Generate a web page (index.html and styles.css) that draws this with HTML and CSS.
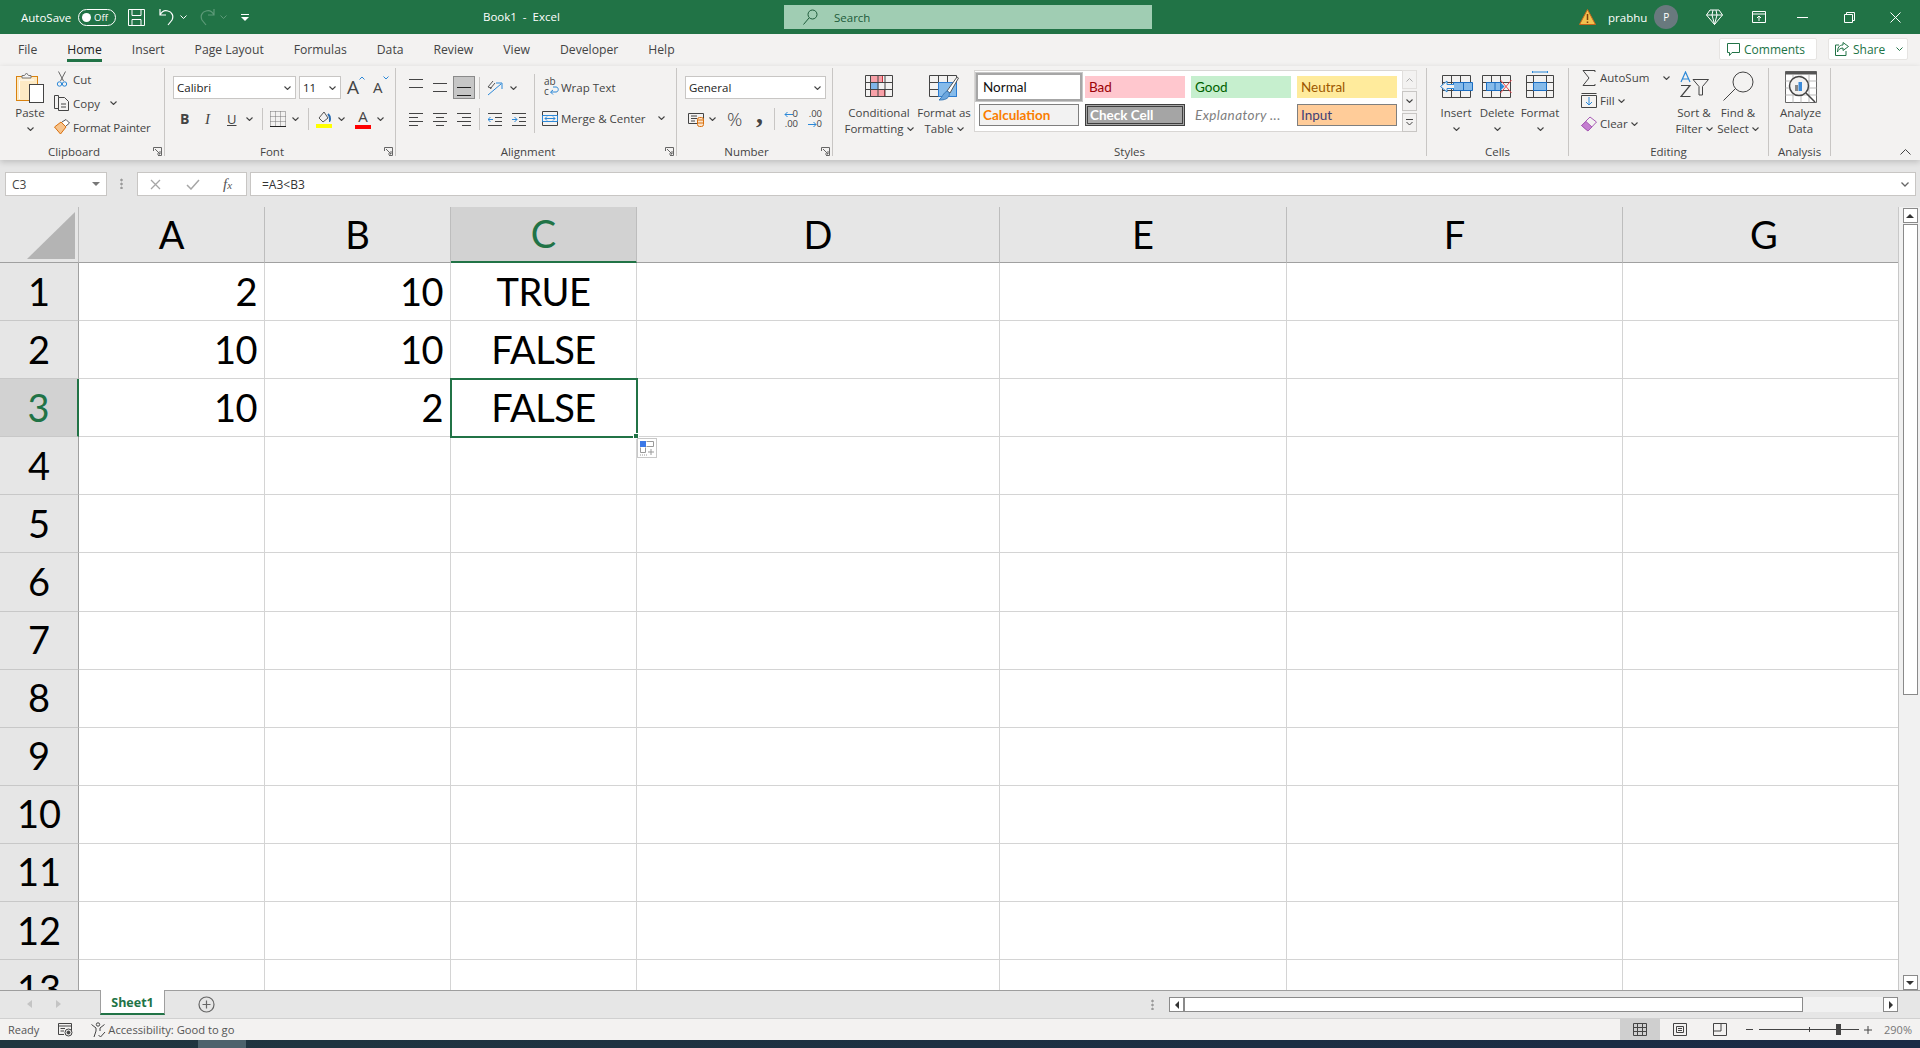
FILE: index.html
```html
<!DOCTYPE html>
<html lang="en">
<head>
    <meta charset="UTF-8">
    <title>Book1 - Excel</title>
    <link rel="stylesheet" href="styles.css">
</head>
<body>
    <svg class="sprite" aria-hidden="true">
        <symbol id="chev" viewBox="0 0 7 4"><path d="M.5.5 3.5 3.5 6.5.5" fill="none" stroke="#444" stroke-width="1.1"/></symbol>
        <symbol id="launcher" viewBox="0 0 9 9"><path d="M.5 4V.5H8.5V8.5H5M2 2 7 7M7 4V7H4" fill="none" stroke="#666"/></symbol>
    </svg>

    <!-- Title bar -->
    <div class="titlebar">
        <div class="qat">
            <span class="autosave">AutoSave</span>
            <span class="toggle"><i></i>Off</span>
            <svg class="qat-save" width="17" height="17" viewBox="0 0 17 17" fill="none" stroke="#fff"><path d="M.5.5H16.5V16.5H.5ZM4 .5V6.5H13V.5M4 16.5V10.5H13V16.5"/></svg>
            <svg class="qat-undo" width="15" height="18" viewBox="0 0 15 18" fill="none" stroke="#fff" stroke-width="1.2"><path d="M1 1V7H7M1 7C3 3 6 2 9 3 13 4 15 8 13 12L9 17"/></svg>
            <svg class="qat-c1" width="7" height="4" viewBox="0 0 7 4"><path d="M.5.5 3.5 3.5 6.5.5" fill="none" stroke="#fff"/></svg>
            <svg class="qat-redo" width="15" height="18" viewBox="0 0 15 18" fill="none" stroke="#5d9a78" stroke-width="1.2"><path d="M14 1V7H8M14 7C12 3 9 2 6 3 2 4 0 8 2 12L6 17"/></svg>
            <svg class="qat-c2" width="7" height="4" viewBox="0 0 7 4"><path d="M.5.5 3.5 3.5 6.5.5" fill="none" stroke="#5d9a78"/></svg>
            <svg class="qat-more" width="8" height="7" viewBox="0 0 8 7"><path d="M0 .5H8" stroke="#fff"/><path d="M0 3H8L4 7Z" fill="#fff"/></svg>
        </div>
        <div class="doc-title">Book1 &nbsp;-&nbsp; Excel</div>
        <div class="search">
            <svg width="15" height="16" viewBox="0 0 15 16" fill="none" stroke="#1d5b3a"><circle cx="9.5" cy="5.5" r="4.5"/><path d="M6 9 .5 15.5"/></svg>
            <span>Search</span>
        </div>
        <div class="account">
            <svg class="warn" width="17" height="16" viewBox="0 0 17 16"><path d="M8.5 .5 16.5 15.5H.5Z" fill="#f2c14e" stroke="#c9651b"/><path d="M8.5 5V11M8.5 12.5V14" stroke="#7a3d0c" stroke-width="1.5"/></svg>
            <span class="user">prabhu</span>
            <span class="avatar">P</span>
            <svg class="diamond" width="17" height="16" viewBox="0 0 17 16" fill="none" stroke="#fff"><path d="M4 1H13L16.5 6 8.5 15.5.5 6ZM.5 6H16.5M6 6 8.5 15.5 11 6M6 6 7 1M11 6 10 1"/></svg>
            <svg class="display" width="14" height="12" viewBox="0 0 14 12" fill="none" stroke="#fff"><path d="M.5.5H13.5V11.5H.5ZM.5 3H13.5M7 10V5M5 7 7 5 9 7"/></svg>
            <svg class="win-min" width="11" height="1"><path d="M0 .5H11" stroke="#fff"/></svg>
            <svg class="win-max" width="11" height="11" viewBox="0 0 11 11" fill="none" stroke="#fff"><path d="M.5 2.5H8.5V10.5H.5ZM2.5 2.5V.5H10.5V8.5H8.5"/></svg>
            <svg class="win-close" width="11" height="11" viewBox="0 0 11 11" stroke="#fff"><path d="M.5.5 10.5 10.5M10.5.5 .5 10.5"/></svg>
        </div>
    </div>

    <!-- Ribbon tabs -->
    <div class="tabs">
        <span class="tab">File</span>
        <span class="tab active">Home</span>
        <span class="tab">Insert</span>
        <span class="tab">Page Layout</span>
        <span class="tab">Formulas</span>
        <span class="tab">Data</span>
        <span class="tab">Review</span>
        <span class="tab">View</span>
        <span class="tab">Developer</span>
        <span class="tab">Help</span>
        <div class="tab-actions">
            <span class="action comments">
                <svg width="13" height="13" viewBox="0 0 13 13" fill="none" stroke="#217346"><path d="M.5.5H12.5V9.5H5L2.5 12.5V9.5H.5Z"/></svg>
                Comments
            </span>
            <span class="action share">
                <svg width="14" height="14" viewBox="0 0 14 14" fill="none" stroke="#217346"><path d="M8 .5 13.5 4.5 8 8.5V6C5 6 3 8 2.5 10 2.5 6 4 3 8 3ZM4 3H.5V13.5H11V9"/></svg>
                Share
                <svg class="share-chev" width="7" height="4" viewBox="0 0 7 4"><path d="M.5.5 3.5 3.5 6.5.5" fill="none" stroke="#217346"/></svg>
            </span>
        </div>
    </div>

    <!-- Ribbon -->
    <div class="ribbon">
        <div class="group g-clipboard launcher-group">
            <div class="group-body">
                <div class="big-btn paste">
                    <div class="big-icon">
                        <svg width="28" height="31" viewBox="0 0 28 31" fill="none"><rect x=".5" y="4.5" width="21" height="24" fill="#fdeac4" stroke="#d9820f"/><path d="M3.5 27V8H18" stroke="#fff"/><path d="M6 6V3.5H8.5L10.5 1 12.5 3.5H15V6Z" fill="#f3f2f1" stroke="#777"/><rect x="13.5" y="12.5" width="14" height="18" fill="#fff" stroke="#444"/></svg>
                    </div>
                    <span>Paste</span>
                    <svg class="chev" width="7" height="4"><use href="#chev"/></svg>
                </div>
                <div class="clip-stack">
                    <div class="small-btn">
                        <svg width="11" height="17" viewBox="0 0 11 17" fill="none"><path d="M2 .5 7 10M9 .5 4 10" stroke="#666"/><circle cx="3" cy="13" r="2.2" stroke="#2b88d8"/><circle cx="8" cy="13" r="2.2" stroke="#2b88d8"/></svg>
                        <span>Cut</span>
                    </div>
                    <div class="small-btn">
                        <svg width="16" height="16" viewBox="0 0 16 16" fill="none" stroke="#444"><path d="M4.5 2.5V.5H.5V13.5H4.5"/><path d="M4.5 2.5H10.5L14.5 6.5V15.5H4.5ZM7 9H12M7 12H12"/></svg>
                        <span>Copy</span>
                        <svg class="copy-chev" width="7" height="4"><use href="#chev"/></svg>
                    </div>
                    <div class="small-btn">
                        <svg width="16" height="16" viewBox="0 0 16 16" fill="none"><path d="M.5 8 7 3 12 8 6.5 15Z" fill="#f7c38b" stroke="#d9700f"/><path d="M8 3 12 .5 15.5 4 12 7" fill="#fff" stroke="#555"/></svg>
                        <span class="painter">Format Painter</span>
                    </div>
                </div>
            </div>
            <div class="group-label">Clipboard</div>
            <svg class="launcher" width="9" height="9"><use href="#launcher"/></svg>
        </div>

        <div class="group g-font launcher-group">
            <div class="group-body column">
                <div class="font-row1">
                    <span class="combo font-name">Calibri<svg width="7" height="4"><use href="#chev"/></svg></span>
                    <span class="combo font-size">11<svg width="7" height="4"><use href="#chev"/></svg></span>
                    <span class="grow">A<svg width="6" height="4" viewBox="0 0 6 4"><path d="M.5 3.5 3 1 5.5 3.5" fill="none" stroke="#2b88d8"/></svg></span>
                    <span class="shrink">A<svg width="6" height="4" viewBox="0 0 6 4"><path d="M.5.5 3 3 5.5.5" fill="none" stroke="#2b88d8"/></svg></span>
                </div>
                <div class="font-row2">
                    <b class="glyph">B</b>
                    <i class="glyph">I</i>
                    <u class="glyph">U</u>
                    <svg width="7" height="4"><use href="#chev"/></svg>
                    <span class="vsep"></span>
                    <svg width="16" height="16" viewBox="0 0 16 16" fill="none"><path d="M.5.5H15.5V15.5M.5.5V15.5M5.5.5V15.5M10.5.5V15.5M.5 5.5H15.5M.5 10.5H15.5" stroke="#777" stroke-dasharray="1 1"/><path d="M0 15.5H16" stroke="#222"/></svg>
                    <svg width="7" height="4"><use href="#chev"/></svg>
                    <span class="vsep"></span>
                    <svg width="16" height="18" viewBox="0 0 16 18" fill="none"><path d="M3 8 8 2 12 8 7 12Z" stroke="#555"/><path d="M12 4C15 7 14 11 13 11" stroke="#2b6cb0" stroke-width="2"/><path d="M0 16H16" stroke="#ffff00" stroke-width="4"/></svg>
                    <svg width="7" height="4"><use href="#chev"/></svg>
                    <span class="color-a">A</span>
                    <svg width="7" height="4"><use href="#chev"/></svg>
                </div>
            </div>
            <div class="group-label">Font</div>
            <svg class="launcher" width="9" height="9"><use href="#launcher"/></svg>
        </div>

        <div class="group g-align launcher-group">
            <div class="group-body">
                <div class="align-left">
                    <div class="align-row">
                        <svg width="14" height="17" viewBox="0 0 14 17" stroke="#444"><path d="M0 .5H14M0 8.5H14"/></svg>
                        <svg width="14" height="17" viewBox="0 0 14 17" stroke="#444"><path d="M0 4.5H14M0 12.5H14"/></svg>
                        <span class="pressed"><svg width="14" height="17" viewBox="0 0 14 17" stroke="#222"><path d="M0 8.5H14M0 16.5H14"/></svg></span>
                        <span class="vsep"></span>
                        <svg width="16" height="16" viewBox="0 0 16 16" fill="none"><path d="M1 7 6 1M3 9 8 3M1 7 5 8" stroke="#555"/><path d="M1 15 14 4M9 3H15V9" stroke="#2b88d8"/></svg>
                        <svg width="7" height="4"><use href="#chev"/></svg>
                    </div>
                    <div class="align-row second">
                        <svg width="14" height="13" viewBox="0 0 14 13" stroke="#444"><path d="M0 .5H14M0 4.5H9M0 8.5H14M0 12.5H9"/></svg>
                        <svg width="14" height="13" viewBox="0 0 14 13" stroke="#444"><path d="M0 .5H14M3 4.5H11M0 8.5H14M3 12.5H11"/></svg>
                        <svg width="14" height="13" viewBox="0 0 14 13" stroke="#444"><path d="M0 .5H14M5 4.5H14M0 8.5H14M5 12.5H14"/></svg>
                        <span class="vsep"></span>
                        <svg width="14" height="13" viewBox="0 0 14 13" fill="none"><path d="M0 .5H14M7 4.5H14M7 8.5H14M0 12.5H14" stroke="#444"/><path d="M5 6.5H0M2.5 4 0 6.5 2.5 9" stroke="#2b88d8"/></svg>
                        <svg width="14" height="13" viewBox="0 0 14 13" fill="none"><path d="M0 .5H14M7 4.5H14M7 8.5H14M0 12.5H14" stroke="#444"/><path d="M0 6.5H5M2.5 4 5 6.5 2.5 9" stroke="#2b88d8"/></svg>
                    </div>
                </div>
                <span class="tall-sep"></span>
                <div class="align-right">
                    <div class="wrap-row">
                        <svg width="16" height="16" viewBox="0 0 16 16" fill="none"><path d="M7 12H12C15 12 15 7 12 7H9M9 10 6.5 12 9 14.5" stroke="#2b88d8"/></svg>
                        <span class="ab">ab<br>c</span>
                        <span>Wrap Text</span>
                    </div>
                    <div class="merge-row">
                        <svg width="16" height="15" viewBox="0 0 16 15" fill="none"><path d="M.5.5H15.5V14.5H.5Z" stroke="#444"/><path d="M.5 4.5H15.5V10.5H.5Z" stroke="#2b88d8"/><path d="M3 7.5H13M5 5.5 3 7.5 5 9.5M11 5.5 13 7.5 11 9.5" stroke="#2b88d8"/></svg>
                        <span>Merge &amp; Center</span>
                        <svg class="merge-chev" width="7" height="4"><use href="#chev"/></svg>
                    </div>
                </div>
            </div>
            <div class="group-label">Alignment</div>
            <svg class="launcher" width="9" height="9"><use href="#launcher"/></svg>
        </div>

        <div class="group g-number launcher-group">
            <div class="group-body column">
                <span class="combo number-format">General<svg width="7" height="4"><use href="#chev"/></svg></span>
                <div class="number-row">
                    <svg width="17" height="15" viewBox="0 0 17 15" fill="none"><path d="M.5 1.5H15.5V11.5H.5Z" stroke="#444"/><path d="M3 4H9M3 6.5H9M3 9H7" stroke="#444"/><rect x="9.5" y="5.5" width="6" height="9" rx="2" fill="#fbe3c8" stroke="#d9700f"/><path d="M9.5 8H15.5M9.5 11H15.5" stroke="#d9700f"/></svg>
                    <svg width="7" height="4"><use href="#chev"/></svg>
                    <span class="percent">%</span>
                    <span class="comma">,</span>
                    <span class="vsep"></span>
                    <span class="decimals">
                        <span><svg width="9" height="7" viewBox="0 0 9 7" fill="none" stroke="#2b88d8"><path d="M9 3.5H1M3.5 1 1 3.5 3.5 6"/></svg>0</span>
                        <span>.00</span>
                    </span>
                    <span class="decimals">
                        <span>.00</span>
                        <span><svg width="9" height="7" viewBox="0 0 9 7" fill="none" stroke="#2b88d8"><path d="M0 3.5H8M5.5 1 8 3.5 5.5 6"/></svg>0</span>
                    </span>
                </div>
            </div>
            <div class="group-label">Number</div>
            <svg class="launcher" width="9" height="9"><use href="#launcher"/></svg>
        </div>

        <div class="group g-styles">
            <div class="group-body">
                <div class="big-btn cf">
                    <div class="big-icon">
                        <svg width="28" height="22" viewBox="0 0 28 22" fill="none"><path d="M5.5.5H17.5V7.5H5.5ZM5.5 14.5H19.5V21.5H5.5Z" fill="#f8a1a8" stroke="#c8323c"/><path d="M5.5 7.5H13.5V14.5H5.5Z" fill="#7eb6e8"/><path d="M.5.5H27.5V21.5H.5ZM.5 7.5H27.5M.5 14.5H27.5M5.5.5V21.5M13 .5V21.5M20 .5V21.5" stroke="#444"/></svg>
                    </div>
                    <span>Conditional</span>
                    <span>Formatting <svg width="7" height="4"><use href="#chev"/></svg></span>
                </div>
                <div class="big-btn ft">
                    <div class="big-icon">
                        <svg width="30" height="26" viewBox="0 0 30 26" fill="none"><path d="M.5.5H27.5V21.5H.5ZM.5 7.5H27.5M.5 14.5H27.5M9.5.5V21.5M18.5.5V21.5" stroke="#444"/><path d="M9.5 7.5H27.5V21.5H9.5Z" fill="#86bbea" stroke="#2b7cd3"/><path d="M18 16 28 2 29.5 3 21 18Z" fill="#fff" stroke="#555"/><path d="M18 16C20 17 21 18 20 21 18 25 13 25 10 25 13 23 14 18 18 16Z" fill="#6ca6dd" stroke="#3b7cba"/></svg>
                    </div>
                    <span>Format as</span>
                    <span>Table <svg width="7" height="4"><use href="#chev"/></svg></span>
                </div>
                <div class="gallery">
                    <div class="style-grid">
                        <span class="style s-normal">Normal</span>
                        <span class="style s-bad">Bad</span>
                        <span class="style s-good">Good</span>
                        <span class="style s-neutral">Neutral</span>
                        <span class="style s-calc">Calculation</span>
                        <span class="style s-check">Check Cell</span>
                        <span class="style s-expl">Explanatory ...</span>
                        <span class="style s-input">Input</span>
                    </div>
                    <div class="gallery-scroll">
                        <span class="gbtn up"><svg width="7" height="4" viewBox="0 0 7 4"><path d="M.5 3.5 3.5.5 6.5 3.5" fill="none" stroke="#aaa"/></svg></span>
                        <span class="gbtn down"><svg width="7" height="4"><use href="#chev"/></svg></span>
                        <span class="gbtn more"><svg width="7" height="7" viewBox="0 0 7 7"><path d="M0 .5H7" stroke="#444"/><path d="M.5 3 3.5 6 6.5 3" fill="none" stroke="#444"/></svg></span>
                    </div>
                </div>
            </div>
            <div class="group-label">Styles</div>
        </div>

        <div class="group g-cells">
            <div class="group-body">
                <div class="big-btn insert">
                    <div class="big-icon">
                        <svg width="33" height="26" viewBox="0 0 33 26" fill="none"><path d="M2.5 3.5H30.5V25.5H2.5ZM2.5 10.5H30.5M2.5 18.5H30.5M11.5 3.5V25.5M20.5 3.5V25.5" stroke="#444"/><path d="M13.5 10.5H32.5V18.5H13.5Z" fill="#86bbea" stroke="#1b6ec2"/><path d="M23.5 10.5V18.5" stroke="#1b6ec2"/><path d="M14 12.5H7V9L.5 14.5 7 20V16.5H14" fill="#f3f2f1" stroke="#2b88d8"/></svg>
                    </div>
                    <span>Insert</span>
                    <svg class="chev" width="7" height="4"><use href="#chev"/></svg>
                </div>
                <div class="big-btn delete">
                    <div class="big-icon">
                        <svg width="30" height="26" viewBox="0 0 30 26" fill="none"><path d="M.5 3.5H28.5V25.5H.5ZM.5 10.5H28.5M.5 18.5H28.5M9.5 3.5V25.5M18.5 3.5V25.5" stroke="#444"/><path d="M4.5 10.5H18.5V18.5H4.5Z" fill="#86bbea" stroke="#1b6ec2"/><path d="M13 10.5V18.5" stroke="#1b6ec2"/><path d="M18.5 10.5 22.5 14.5 18.5 18.5Z" fill="#2b88d8"/><path d="M18.5 8 29.5 21M29.5 8 18.5 21" stroke="#e8474f"/></svg>
                    </div>
                    <span>Delete</span>
                    <svg class="chev" width="7" height="4"><use href="#chev"/></svg>
                </div>
                <div class="big-btn format">
                    <div class="big-icon top-bar">
                        <svg width="28" height="27" viewBox="0 0 28 27" fill="none"><path d="M6.5 1H21.5M6.5 0V2M21.5 0V2" stroke="#2b88d8"/><path d="M.5 4.5H27.5V26.5H.5ZM.5 11.5H27.5M.5 19.5H27.5M7.5 4.5V26.5M20.5 4.5V26.5" stroke="#444"/><path d="M7.5 11.5H20.5V19.5H7.5Z" fill="#86bbea" stroke="#1b6ec2"/></svg>
                    </div>
                    <span>Format</span>
                    <svg class="chev" width="7" height="4"><use href="#chev"/></svg>
                </div>
            </div>
            <div class="group-label">Cells</div>
        </div>

        <div class="group g-editing">
            <div class="group-body">
                <div class="edit-stack">
                    <div class="small-btn">
                        <svg width="14" height="16" viewBox="0 0 14 16" fill="none" stroke="#444"><path d="M13 2V.5H1L7 8 1 15.5H13V14"/></svg>
                        <span>AutoSum</span>
                        <svg class="sum-chev" width="7" height="4"><use href="#chev"/></svg>
                    </div>
                    <div class="small-btn">
                        <svg width="16" height="15" viewBox="0 0 16 15" fill="none"><path d="M.5 2.5H15.5V14.5H.5Z" stroke="#444"/><path d="M.5.5H15.5" stroke="#444"/><path d="M8 4V12M5 9 8 12 11 9" stroke="#2b88d8"/></svg>
                        <span>Fill</span>
                        <svg width="7" height="4"><use href="#chev"/></svg>
                    </div>
                    <div class="small-btn">
                        <svg width="16" height="16" viewBox="0 0 16 16"><path d="M.5 9.5 9 1 15.5 6 7 15Z" fill="#f3f2f1" stroke="#a75bb5"/><path d="M.5 9.5 5 5.5 11 11 7 15Z" fill="#c47fd0" stroke="#a75bb5"/></svg>
                        <span>Clear</span>
                        <svg width="7" height="4"><use href="#chev"/></svg>
                    </div>
                </div>
                <div class="big-btn sort">
                    <div class="big-icon tight">
                        <svg width="29" height="27" viewBox="0 0 29 27" fill="none"><path d="M1 11 5.5 1 10 11M2.5 8H8.5" stroke="#2b88d8" stroke-width="1.2"/><path d="M1 14.5H10L1 25.5H10.5" stroke="#444" stroke-width="1.2"/><path d="M13 8.5H28.5L22.5 15.5V24H19V15.5Z" stroke="#444"/></svg>
                    </div>
                    <span>Sort &amp;</span>
                    <span>Filter <svg width="7" height="4"><use href="#chev"/></svg></span>
                </div>
                <div class="big-btn find">
                    <div class="big-icon tight">
                        <svg width="31" height="30" viewBox="0 0 31 30" fill="none" stroke="#444"><circle cx="20" cy="11" r="10"/><path d="M12 18 .5 29.5"/></svg>
                    </div>
                    <span>Find &amp;</span>
                    <span>Select <svg width="7" height="4"><use href="#chev"/></svg></span>
                </div>
            </div>
            <div class="group-label">Editing</div>
        </div>

        <div class="group g-analysis">
            <div class="group-body">
                <div class="big-btn analyze">
                    <div class="big-icon tight">
                        <svg width="32" height="32" viewBox="0 0 32 32" fill="none"><path d="M.5.5H31.5V31.5H.5Z" stroke="#666" fill="#fff"/><path d="M.5 2H31.5" stroke="#555" stroke-width="3"/><path d="M.5 10H31.5M.5 17H31.5M.5 24H31.5M8 4V31.5M16 4V31.5M24 4V31.5" stroke="#bbb"/><circle cx="14" cy="15" r="9.5" fill="#f3f2f1" stroke="#444" stroke-width="1.5"/><path d="M10 14H13V20H10Z" fill="#888"/><path d="M13.5 11H17V20H13.5Z" fill="#3b8ad9"/><path d="M21 22 30 31" stroke="#444" stroke-width="1.5"/></svg>
                    </div>
                    <span>Analyze</span>
                    <span>Data</span>
                </div>
            </div>
            <div class="group-label">Analysis</div>
        </div>

        <svg class="collapse" width="11" height="6" viewBox="0 0 11 6"><path d="M.5 5.5 5.5.5 10.5 5.5" fill="none" stroke="#444"/></svg>
    </div>

    <!-- Formula bar -->
    <div class="formula-bar">
        <div class="name-box">C3<svg width="8" height="4" viewBox="0 0 8 4"><path d="M0 0H8L4 4Z" fill="#777"/></svg></div>
        <div class="dots"></div>
        <div class="fx-box">
            <svg width="11" height="11" viewBox="0 0 11 11" stroke="#a6a6a6" stroke-width="1.3"><path d="M1 1 10 10M10 1 1 10"/></svg>
            <svg width="14" height="11" viewBox="0 0 14 11" fill="none" stroke="#a6a6a6" stroke-width="1.5"><path d="M1 6 5 10 13 1"/></svg>
            <span class="fx">f<small>x</small></span>
        </div>
        <div class="formula-input">=A3&lt;B3<svg width="8" height="5" viewBox="0 0 8 5"><path d="M.5.5 4 4 7.5.5" fill="none" stroke="#666" stroke-width="1.3"/></svg></div>
    </div>

    <!-- Sheet -->
    <div class="sheet">
        <div class="grid">
            <div class="row head-row">
                <div class="corner"><span></span></div>
                <div class="col-head">A</div>
                <div class="col-head">B</div>
                <div class="col-head selected">C</div>
                <div class="col-head">D</div>
                <div class="col-head">E</div>
                <div class="col-head">F</div>
                <div class="col-head">G</div>
            </div>
            <div class="row"><div class="row-head">1</div><div class="cell num">2</div><div class="cell num">10</div><div class="cell bool">TRUE</div><div class="cell"></div><div class="cell"></div><div class="cell"></div><div class="cell"></div></div>
            <div class="row"><div class="row-head">2</div><div class="cell num">10</div><div class="cell num">10</div><div class="cell bool">FALSE</div><div class="cell"></div><div class="cell"></div><div class="cell"></div><div class="cell"></div></div>
            <div class="row"><div class="row-head selected">3</div><div class="cell num">10</div><div class="cell num">2</div><div class="cell bool active">FALSE
                <span class="handle"></span>
                <span class="quick-analysis"><svg width="16" height="16" viewBox="0 0 16 16" fill="none"><rect x="1" y="1" width="6" height="6" fill="#3b78e7"/><path d="M7.5 1.5H14.5V6.5H7.5M1.5 7.5V12.5H6.5V7.5" stroke="#999"/><path d="M1 15H8" stroke="#999" stroke-dasharray="1 1"/><path d="M12 9V15M9 12H15" stroke="#999"/></svg></span>
            </div><div class="cell"></div><div class="cell"></div><div class="cell"></div><div class="cell"></div></div>
            <div class="row"><div class="row-head">4</div><div class="cell"></div><div class="cell"></div><div class="cell"></div><div class="cell"></div><div class="cell"></div><div class="cell"></div><div class="cell"></div></div>
            <div class="row"><div class="row-head">5</div><div class="cell"></div><div class="cell"></div><div class="cell"></div><div class="cell"></div><div class="cell"></div><div class="cell"></div><div class="cell"></div></div>
            <div class="row"><div class="row-head">6</div><div class="cell"></div><div class="cell"></div><div class="cell"></div><div class="cell"></div><div class="cell"></div><div class="cell"></div><div class="cell"></div></div>
            <div class="row"><div class="row-head">7</div><div class="cell"></div><div class="cell"></div><div class="cell"></div><div class="cell"></div><div class="cell"></div><div class="cell"></div><div class="cell"></div></div>
            <div class="row"><div class="row-head">8</div><div class="cell"></div><div class="cell"></div><div class="cell"></div><div class="cell"></div><div class="cell"></div><div class="cell"></div><div class="cell"></div></div>
            <div class="row"><div class="row-head">9</div><div class="cell"></div><div class="cell"></div><div class="cell"></div><div class="cell"></div><div class="cell"></div><div class="cell"></div><div class="cell"></div></div>
            <div class="row"><div class="row-head">10</div><div class="cell"></div><div class="cell"></div><div class="cell"></div><div class="cell"></div><div class="cell"></div><div class="cell"></div><div class="cell"></div></div>
            <div class="row"><div class="row-head">11</div><div class="cell"></div><div class="cell"></div><div class="cell"></div><div class="cell"></div><div class="cell"></div><div class="cell"></div><div class="cell"></div></div>
            <div class="row"><div class="row-head">12</div><div class="cell"></div><div class="cell"></div><div class="cell"></div><div class="cell"></div><div class="cell"></div><div class="cell"></div><div class="cell"></div></div>
            <div class="row"><div class="row-head">13</div><div class="cell"></div><div class="cell"></div><div class="cell"></div><div class="cell"></div><div class="cell"></div><div class="cell"></div><div class="cell"></div></div>
        </div>
        <div class="vscroll">
            <span class="sbtn"><svg width="8" height="4" viewBox="0 0 8 4"><path d="M4 0 8 4H0Z" fill="#333"/></svg></span>
            <span class="vthumb"></span>
            <span class="sbtn end"><svg width="8" height="4" viewBox="0 0 8 4"><path d="M0 0H8L4 4Z" fill="#333"/></svg></span>
        </div>
    </div>

    <!-- Sheet tabs -->
    <div class="sheet-tabs">
        <svg class="nav-l" width="5" height="8" viewBox="0 0 5 8"><path d="M5 0V8L0 4Z" fill="#c4c4c4"/></svg>
        <svg class="nav-r" width="5" height="8" viewBox="0 0 5 8"><path d="M0 0V8L5 4Z" fill="#c4c4c4"/></svg>
        <div class="sheet-tab">Sheet1</div>
        <svg class="add-sheet" width="17" height="17" viewBox="0 0 17 17" fill="none" stroke="#666" stroke-width="1.2"><circle cx="8.5" cy="8.5" r="7.5"/><path d="M8.5 4.5V12.5M4.5 8.5H12.5"/></svg>
        <div class="split-dots"></div>
        <div class="hscroll">
            <span class="sbtn"><svg width="4" height="8" viewBox="0 0 4 8"><path d="M4 0V8L0 4Z" fill="#333"/></svg></span>
            <span class="hthumb"></span>
            <span class="sbtn end"><svg width="4" height="8" viewBox="0 0 4 8"><path d="M0 0V8L4 4Z" fill="#333"/></svg></span>
        </div>
    </div>

    <!-- Status bar -->
    <div class="statusbar">
        <span class="ready">Ready</span>
        <svg class="macro" width="15" height="14" viewBox="0 0 15 14" fill="none" stroke="#444"><path d="M.5.5H13.5V11.5H7M.5.5V11.5H6M.5 3H13.5M2.5 5.5H7M2.5 8H6"/><circle cx="10.5" cy="9.5" r="3.5" fill="#f3f2f1"/><circle cx="10.5" cy="9.5" r="1.5" fill="#444"/></svg>
        <svg class="a11y" width="15" height="16" viewBox="0 0 15 16" fill="none" stroke="#444"><circle cx="7" cy="2.5" r="1.7"/><path d="M.5 2.5 5 6V9L3 15M13.5 2.5 9 6V9M7.5 13 9.5 15 14 10"/></svg>
        <span class="a11y-text">Accessibility: Good to go</span>
        <div class="views">
            <span class="view on"><svg width="14" height="13" viewBox="0 0 14 13" fill="none" stroke="#444"><path d="M.5.5H13.5V12.5H.5ZM.5 4.5H13.5M.5 8.5H13.5M4.5.5V12.5M9.5.5V12.5"/></svg></span>
            <span class="view"><svg width="14" height="13" viewBox="0 0 14 13" fill="none" stroke="#444"><path d="M.5.5H13.5V12.5H.5ZM3.5 3.5H10.5V9.5H3.5ZM5 5.5H9M5 7.5H9"/></svg></span>
            <span class="view"><svg width="14" height="13" viewBox="0 0 14 13" fill="none" stroke="#444"><path d="M.5.5H13.5V12.5H.5ZM.5 8H8M8 .5V8"/></svg></span>
        </div>
        <div class="zoom">
            <svg width="7" height="1"><path d="M0 .5H7" stroke="#444"/></svg>
            <div class="slider"><span class="tick"></span><span class="thumb"></span></div>
            <svg width="8" height="8" viewBox="0 0 8 8" stroke="#444"><path d="M0 4H8M4 0V8"/></svg>
            <span class="zoom-pct">290%</span>
        </div>
    </div>

    <div class="taskbar">
        <span class="task-on"></span>
        <span class="clock">10:34 AM</span>
    </div>
</body>
</html>
```
FILE: styles.css
```css
* {
    box-sizing: border-box;
}

body {
    margin: 0;
    height: 1048px;
    overflow: hidden;
    display: flex;
    flex-direction: column;
    font-family: "Open Sans", "Noto Sans", sans-serif;
    font-size: 11.5px;
    color: #444;
    background-color: #f3f2f1;
}

svg {
    display: block;
    flex: none;
}

.sprite {
    width: 0;
    height: 0;
    position: absolute;
}

/* Title bar */
.titlebar {
    height: 34px;
    flex: none;
    background-color: #217346;
    color: #fff;
    display: flex;
    align-items: center;
}

.qat {
    width: 784px;
    display: flex;
    align-items: center;
    padding-left: 21px;
}

.autosave {
    width: 57px;
}

.toggle {
    width: 38px;
    height: 17px;
    border: 1px solid #fff;
    border-radius: 9px;
    font-size: 9.5px;
    display: flex;
    align-items: center;
    gap: 3px;
    padding-left: 3px;
}

.toggle i {
    width: 9px;
    height: 9px;
    background-color: #fff;
    border-radius: 50%;
}

.qat-save { margin-left: 12px; }
.qat-undo { margin-left: 14px; }
.qat-c1 { margin-left: 6px; }
.qat-redo { margin-left: 13px; }
.qat-c2 { margin-left: 5px; }
.qat-more { margin-left: 14px; }

.doc-title {
    position: absolute;
    left: 483px;
    top: 9px;
}

.search {
    width: 368px;
    height: 24px;
    background-color: #a0cdb3;
    color: #1d5b3a;
    display: flex;
    align-items: center;
    gap: 16px;
    padding-left: 19px;
}

.account {
    flex: 1;
    display: flex;
    align-items: center;
    padding-left: 427px;
}

.user {
    margin-left: 12px;
}

.avatar {
    width: 24px;
    height: 24px;
    margin-left: 7px;
    border-radius: 50%;
    background-color: #69797e;
    display: flex;
    align-items: center;
    justify-content: center;
    font-size: 10px;
}

.diamond { margin-left: 28px; }
.display { margin-left: 29px; }
.win-min { margin-left: 31px; }
.win-max { margin-left: 36px; }
.win-close { margin-left: 35px; }

/* Tabs */
.tabs {
    height: 32px;
    flex: none;
    display: flex;
    align-items: center;
    padding-left: 18px;
    gap: 30px;
    font-size: 12.2px;
    background-color: #f3f2f1;
}

.tab {
    height: 32px;
    line-height: 31px;
    position: relative;
}

.tab.active {
    color: #222;
    font-weight: 500;
}

.tab.active::after {
    content: "";
    position: absolute;
    left: 0;
    right: 0;
    bottom: 4px;
    height: 3px;
    background-color: #217346;
}

.tab-actions {
    margin-left: auto;
    margin-top: -2px;
    display: flex;
    gap: 11px;
    padding-right: 12px;
}

.action {
    height: 22px;
    background-color: #fff;
    border: 1px solid #e6e4e2;
    border-radius: 2px;
    color: #217346;
    display: flex;
    align-items: center;
    gap: 4px;
    font-size: 12px;
    white-space: nowrap;
}

.comments {
    width: 98px;
    padding-left: 7px;
}

.share {
    width: 80px;
    padding-left: 6px;
}

.share-chev {
    margin-left: 7px;
}

/* Ribbon */
.ribbon {
    height: 94px;
    flex: none;
    display: flex;
    position: relative;
    z-index: 2;
    background-color: #f3f2f1;
    padding: 2px 0 4px;
    box-shadow: 0 2px 6px rgba(0, 0, 0, 0.18);
}

.group {
    position: relative;
    display: flex;
    flex-direction: column;
    border-right: 1px solid #c8c6c4;
    white-space: nowrap;
}

.group-body {
    height: 75px;
    flex: none;
    display: flex;
}

.group-body.column {
    flex-direction: column;
}

.group-label {
    text-align: center;
    line-height: 14px;
    padding-top: 2px;
}

.launcher-group .group-label {
    padding-right: 16px;
}

.launcher {
    position: absolute;
    right: 2px;
    bottom: 0;
}

.g-clipboard { width: 165px; padding-left: 15px; }
.g-font { width: 231px; padding-left: 8px; }
.g-align { width: 281px; padding-left: 13px; }
.g-number { width: 156px; padding-left: 8px; }
.g-styles { width: 594px; padding-left: 9px; }
.g-cells { width: 142px; padding-left: 9px; }
.g-editing { width: 200px; padding-left: 12px; }
.g-analysis { width: 62px; padding-left: 6px; }

.g-clipboard .group-label { margin-left: -15px; }
.g-font .group-label { margin-left: -8px; }
.g-align .group-label { margin-left: -13px; }
.g-number .group-label { margin-left: -8px; }
.g-styles .group-label { margin-left: -9px; }
.g-cells .group-label { margin-left: -9px; }
.g-editing .group-label { margin-left: -12px; }
.g-analysis .group-label { margin-left: -6px; }

.big-btn {
    display: flex;
    flex-direction: column;
    align-items: center;
    line-height: 16px;
}

.big-btn span {
    display: flex;
    align-items: center;
    gap: 3px;
}

.big-icon {
    height: 37px;
    padding-top: 7px;
}

.big-icon.tight {
    padding-top: 3px;
}

.big-btn .chev {
    margin-top: 6px;
}

.small-btn {
    display: flex;
    align-items: center;
    gap: 3px;
}

.vsep {
    width: 1px;
    height: 22px;
    background-color: #c8c6c4;
}

.combo {
    height: 23px;
    background-color: #fff;
    border: 1px solid #c8c6c4;
    color: #222;
    display: flex;
    align-items: center;
    justify-content: space-between;
    padding: 0 4px 0 3px;
}

/* Clipboard */
.paste {
    width: 30px;
    margin-right: 7px;
}

.paste .big-icon {
    padding-top: 4px;
}

.clip-stack {
    margin-top: -1px;
}

.clip-stack .small-btn {
    height: 24px;
    padding-left: 2px;
}

.clip-stack .small-btn svg:first-child {
    width: 16px;
}

.copy-chev {
    margin-left: 7px;
}

.painter {
    letter-spacing: -0.2px;
}

/* Font */
.font-row1 {
    margin-top: 8px;
    display: flex;
}

.font-name { width: 123px; }
.font-size { width: 42px; margin-left: 3px; }

.grow, .shrink {
    display: flex;
    align-items: flex-start;
    line-height: 23px;
}

.grow { font-size: 19px; margin-left: 6px; }
.shrink { font-size: 15px; margin-left: 8px; }

.font-row2 {
    margin-top: 9px;
    padding-left: 7px;
    height: 20px;
    display: grid;
    grid-template-columns: 25px 22px 19px 16px 8px 22px 16px 8px 22px 17px 22px 7px;
    align-items: center;
}

.glyph {
    font-family: "Liberation Serif", serif;
    font-size: 15px;
    line-height: 20px;
}

b.glyph {
    font-family: "Open Sans", sans-serif;
    font-size: 14px;
}

u.glyph {
    font-family: "Open Sans", sans-serif;
    font-size: 13px;
}

.color-a {
    width: 16px;
    height: 20px;
    font-size: 15px;
    line-height: 15px;
    text-align: center;
    border-bottom: 4px solid #f00;
}

/* Alignment */
.align-left {
    width: 108px;
}

.align-row {
    margin-top: 8px;
    height: 23px;
    display: grid;
    grid-template-columns: 24px 20px 26px 8px 23px 7px;
    align-items: center;
}

.align-row.second {
    margin-top: 9px;
    height: 20px;
    grid-template-columns: 24px 24px 22px 9px 24px 5px;
}

.pressed {
    width: 22px;
    height: 23px;
    background-color: #c6c6c6;
    border: 1px solid #8a8a8a;
    padding: 2px 3px 0;
}

.tall-sep {
    width: 1px;
    height: 59px;
    margin: 6px 9px 0 17px;
    background-color: #c8c6c4;
}

.align-right {
    position: relative;
}

.wrap-row {
    height: 23px;
    margin-top: 8px;
    display: flex;
    align-items: center;
    gap: 1px;
}

.ab {
    position: absolute;
    left: 0;
    top: 8px;
    font-size: 10px;
    line-height: 10px;
}

.merge-row {
    margin-top: 8px;
    margin-left: -2px;
    height: 22px;
    display: flex;
    align-items: center;
    gap: 3px;
}

.merge-chev {
    margin-left: 9px;
}

/* Number */
.number-format {
    width: 141px;
    margin-top: 8px;
}

.number-row {
    margin-top: 9px;
    height: 20px;
    padding-left: 3px;
    display: grid;
    grid-template-columns: 21px 18px 29px 18px 8px 24px 20px;
    align-items: center;
}

.percent {
    font-size: 19px;
    line-height: 20px;
    font-weight: 300;
}

.comma {
    font-family: "Liberation Serif", serif;
    font-weight: bold;
    font-size: 28px;
    line-height: 12px;
    margin-top: -10px;
}

.decimals {
    font-size: 9.5px;
    line-height: 10px;
    width: 16px;
    display: flex;
    flex-direction: column;
    align-items: flex-end;
}

.decimals span {
    display: flex;
    align-items: center;
}

/* Styles */
.cf {
    width: 74px;
}

.ft {
    width: 56px;
}

.gallery {
    width: 443px;
    height: 62px;
    margin: 2px 0 0 2px;
    background-color: #fff;
    border: 1px solid #d8d6d4;
    display: flex;
    justify-content: space-between;
}

.style-grid {
    display: grid;
    grid-template-columns: repeat(4, 100px);
    grid-template-rows: 22px 22px;
    gap: 6px;
    padding: 5px 0 0 4px;
}

.style {
    font-family: Lato, sans-serif;
    font-size: 13.5px;
    display: flex;
    align-items: center;
    padding-left: 4px;
}

.s-normal {
    margin: -3px -3px;
    color: #111;
    background-color: #fff;
    border: 2px solid #a6a6a6;
    outline: 1px solid #c8c8c8;
    padding-left: 5px;
}

.s-bad { background-color: #ffc7ce; color: #9c0006; }
.s-good { background-color: #c6efce; color: #006100; }
.s-neutral { background-color: #ffeb9c; color: #9c5700; }

.s-calc {
    background-color: #f2f2f2;
    border: 1px solid #7f7f7f;
    color: #fa7d00;
    font-weight: bold;
    padding-left: 3px;
}

.s-check {
    background-color: #a5a5a5;
    border: 3px double #3f3f3f;
    color: #fff;
    font-weight: bold;
    padding-left: 2px;
}

.s-expl {
    color: #7f7f7f;
    font-style: italic;
    letter-spacing: 0.4px;
}

.s-input {
    background-color: #ffcc99;
    border: 1px solid #7f7f7f;
    color: #3f3f76;
    padding-left: 3px;
}

.gallery-scroll {
    width: 15px;
    display: flex;
    flex-direction: column;
    margin: -1px -1px -1px 0;
    gap: 2px;
    background-color: #f3f2f1;
}

.gbtn {
    flex: 1;
    border: 1px solid #c8c6c4;
    display: flex;
    align-items: center;
    justify-content: center;
}

.gbtn.up {
    border-color: #e1dfdd;
}

/* Cells */
.insert { width: 40px; }
.delete { width: 42px; }
.format { width: 44px; }

.g-cells .big-icon {
    padding-top: 4px;
}

.g-cells .big-icon.top-bar {
    padding-top: 3px;
}

/* Editing */
.edit-stack {
    width: 91px;
    margin-top: -2px;
}

.edit-stack .small-btn {
    height: 23px;
}

.edit-stack .small-btn svg:first-child {
    width: 16px;
}

.sum-chev {
    margin-left: 11px;
}

.sort { width: 44px; }
.find { width: 44px; }

.analyze { width: 51px; }

.collapse {
    position: absolute;
    right: 9px;
    bottom: 5px;
}

/* Formula bar */
.formula-bar {
    height: 47px;
    flex: none;
    background-color: #e6e6e6;
    padding: 12px 4px 11px 5px;
    display: flex;
    font-size: 12px;
}

.name-box {
    width: 102px;
    background-color: #fff;
    border: 1px solid #c8c6c4;
    display: flex;
    align-items: center;
    justify-content: space-between;
    padding: 0 6px;
}

.dots {
    width: 3px;
    height: 11px;
    margin: 6px 14px 0 13px;
    background-image: radial-gradient(#999 1px, transparent 1.2px);
    background-size: 3px 4px;
}

.fx-box {
    width: 110px;
    background-color: #fff;
    border: 1px solid #c8c6c4;
    display: flex;
    align-items: center;
    gap: 25px;
    padding-left: 12px;
}

.fx {
    font-family: "Liberation Serif", serif;
    font-style: italic;
    font-size: 15px;
    color: #555;
    margin-left: -2px;
}

.fx small {
    font-size: 11px;
}

.formula-input {
    flex: 1;
    margin-left: 3px;
    background-color: #fff;
    border: 1px solid #c8c6c4;
    display: flex;
    align-items: center;
    justify-content: space-between;
    padding: 0 6px 0 11px;
    color: #333;
}

/* Sheet */
.sheet {
    flex: 1;
    min-height: 0;
    display: flex;
    background-color: #fff;
    overflow: hidden;
}

.grid {
    width: 1898px;
    overflow: hidden;
    font-family: Lato, sans-serif;
    font-size: 38px;
    color: #000;
}

.row {
    height: 58.1px;
    display: grid;
    grid-template-columns: 79px 186px 186px 186px 363px 287px 336px 283px;
}

.row.head-row {
    height: 56px;
}

.corner {
    background-color: #e6e6e6;
    border-right: 1px solid #bdbdbd;
    border-bottom: 1px solid #a0a0a0;
    padding: 5px 3px 3px 27px;
}

.corner span {
    display: block;
    width: 48px;
    height: 47px;
    background-color: #b4b4b4;
    clip-path: polygon(100% 0, 100% 100%, 0 100%);
}

.col-head {
    background-color: #e6e6e6;
    border-right: 1px solid #bdbdbd;
    border-bottom: 1px solid #a0a0a0;
    display: flex;
    align-items: center;
    justify-content: center;
    padding-bottom: 2px;
}

.col-head.selected {
    background-color: #d2d2d2;
    border-bottom: 2px solid #217346;
    color: #217346;
}

.row-head {
    background-color: #e6e6e6;
    border-right: 1px solid #a0a0a0;
    border-bottom: 1px solid #c8c8c8;
    display: flex;
    align-items: center;
    justify-content: center;
    padding-bottom: 2px;
}

.row-head.selected {
    background-color: #d2d2d2;
    border-right: 2px solid #217346;
    color: #217346;
}

.cell {
    position: relative;
    border-right: 1px solid #d4d4d4;
    border-bottom: 1px solid #d4d4d4;
    display: flex;
    align-items: center;
    letter-spacing: -0.5px;
    padding-bottom: 2px;
}

.cell.num {
    justify-content: flex-end;
    padding-right: 7px;
}

.cell.bool {
    justify-content: center;
}

.cell.active {
    z-index: 1;
    outline: 2px solid #217346;
    outline-offset: -1px;
}

.handle {
    position: absolute;
    right: -3px;
    bottom: -3px;
    width: 6px;
    height: 6px;
    background-color: #217346;
    border: 1px solid #fff;
}

.quick-analysis {
    position: absolute;
    left: calc(100% + 1px);
    top: calc(100% + 2px);
    width: 20px;
    height: 20px;
    background-color: #fff;
    border: 1px solid #c8c8c8;
    padding: 1px;
}

.vscroll {
    width: 22px;
    background-color: #f1f1f1;
    border-left: 1px solid #c8c8c8;
    display: flex;
    flex-direction: column;
    align-items: center;
    padding: 1px 0 0 1px;
}

.sbtn {
    width: 15px;
    height: 15px;
    flex: none;
    background-color: #fff;
    border: 1px solid #8a8a8a;
    display: flex;
    align-items: center;
    justify-content: center;
}

.vthumb {
    width: 15px;
    height: 471px;
    margin-top: 1px;
    background-color: #fff;
    border: 1px solid #8a8a8a;
}

.sbtn.end {
    margin-top: auto;
}

/* Sheet tabs */
.sheet-tabs {
    height: 28px;
    flex: none;
    position: relative;
    background-color: #e6e6e6;
    border-top: 1px solid #9e9e9e;
    display: flex;
}

.nav-l { margin: 9px 0 0 27px; }
.nav-r { margin: 9px 0 0 24px; }

.sheet-tab {
    width: 65px;
    height: 25px;
    margin-left: 39px;
    margin-top: -1px;
    background-color: #fff;
    border: 1px solid #9e9e9e;
    border-top: none;
    border-bottom: 2px solid #217346;
    color: #217346;
    font-weight: 700;
    font-size: 12.5px;
    display: flex;
    align-items: center;
    justify-content: center;
    padding-top: 1px;
}

.add-sheet { margin: 5px 0 0 33px; }

.split-dots {
    width: 3px;
    height: 11px;
    margin: 8px 0 0 936px;
    background-image: radial-gradient(#999 1px, transparent 1.2px);
    background-size: 3px 4px;
}

.hscroll {
    width: 729px;
    height: 15px;
    margin: 6px 0 0 15px;
    background-color: #f1f1f1;
    display: flex;
}

.hthumb {
    width: 619px;
    background-color: #fff;
    border: 1px solid #8a8a8a;
}

.hscroll .sbtn.end {
    margin-top: 0;
    margin-left: auto;
}

/* Status bar */
.statusbar {
    height: 22px;
    flex: none;
    background-color: #f3f2f1;
    border-top: 1px solid #d0d0d0;
    display: flex;
    align-items: center;
    padding-left: 8px;
    font-size: 11px;
    color: #555;
}

.macro { margin-left: 19px; }
.a11y { margin-left: 18px; }
.a11y-text { margin-left: 2px; font-size: 11.2px; }

.views {
    margin-left: auto;
    height: 21px;
    display: flex;
}

.view {
    width: 40px;
    display: flex;
    align-items: center;
    justify-content: center;
}

.view.on {
    background-color: #cfcfcf;
}

.zoom {
    display: flex;
    align-items: center;
    margin-left: 6px;
    padding-right: 8px;
}

.slider {
    position: relative;
    width: 100px;
    height: 1px;
    margin: 0 5px 0 6px;
    background-color: #444;
}

.tick {
    position: absolute;
    left: 50px;
    top: -2px;
    width: 1px;
    height: 5px;
    background-color: #444;
}

.thumb {
    position: absolute;
    left: 77px;
    top: -5px;
    width: 5px;
    height: 11px;
    background-color: #444;
}

.zoom-pct {
    width: 40px;
    text-align: right;
    color: #777;
}

/* Taskbar strip */
.taskbar {
    height: 8px;
    flex: none;
    position: relative;
    overflow: hidden;
    background: linear-gradient(90deg, #20363f, #1a2a45);
}

.task-on {
    position: absolute;
    left: 198px;
    top: 0;
    width: 48px;
    height: 8px;
    background-color: #4c626c;
}

.clock {
    position: absolute;
    left: 1808px;
    top: 5px;
    color: #fff;
    font-size: 12px;
    line-height: 16px;
}
```
